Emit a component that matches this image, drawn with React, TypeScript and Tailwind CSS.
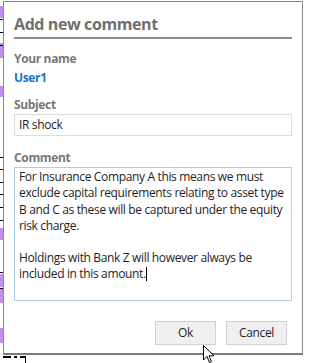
import React from 'react';

const stripMarks = [
  { top: 6, h: 12, purple: true },
  { top: 19, h: 1 },
  { top: 32, h: 1 },
  { top: 43, h: 15, purple: true },
  { top: 45, h: 1 },
  { top: 86, h: 11, purple: true },
  { top: 157, h: 1 },
  { top: 169, h: 1 },
  { top: 182, h: 1 },
  { top: 194, h: 1 },
  { top: 207, h: 1 },
  { top: 220, h: 1 },
  { top: 228, h: 12, purple: true },
  { top: 272, h: 1 },
  { top: 274, h: 13, purple: true },
  { top: 288, h: 1 },
  { top: 289, h: 14, purple: true },
  { top: 328, h: 15, purple: true },
];

export default function App() {
  return (
    <div className="relative w-[315px] h-[363px] overflow-hidden bg-white" style={{ fontFamily: '"Open Sans", "Noto Sans", sans-serif' }}>
      {/* background page peeking out on the left */}
      <div className="absolute left-0 top-0 w-[3px] h-[355px]">
        {stripMarks.map((m, i) => (
          <div
            key={i}
            className={m.purple ? 'absolute left-0 w-[3px] bg-[#c08ff0]' : 'absolute left-0 w-[3px] bg-black'}
            style={{ top: m.top, height: m.h }}
          />
        ))}
      </div>
      <div className="absolute left-[3px] top-[356px] flex gap-[3px]">
        <div className="w-[8px] h-[2px] bg-black" />
        <div className="w-[3px] h-[2px] bg-black" />
        <div className="w-[6px] h-[2px] bg-black" />
      </div>
      <div className="absolute left-[25px] top-[356px] w-[1px] h-[7px] bg-black" />

      {/* dialog */}
      <div className="absolute left-[3px] top-[1px] w-[300px] h-[354px] border border-[#8a8a8a] border-b-2 border-b-[#7a7a7a] bg-white px-[10px] tracking-[-0.35px]">
        <div className="pt-[11px] pb-[2px] border-b-2 border-[#8c8c8c] text-[16px] leading-[22px] font-bold text-[#6f6f6f] tracking-[-0.4px]">
          Add new comment
        </div>

        <div className="mt-[12px] text-[12px] leading-[16px] font-bold text-[#777]">Your name</div>
        <div className="mt-[3px] text-[12px] leading-[16px] font-bold text-[#1a73c9]">User1</div>

        <div className="mt-[11px] text-[12px] leading-[16px] font-bold text-[#777]">Subject</div>
        <div className="mt-[1px] h-[22px] border border-[#dcdcdc] px-[4px] text-[12px] leading-[20px] text-[#1e1e1e]">
          IR shock
        </div>

        <div className="mt-[14px] text-[12px] leading-[16px] font-bold text-[#777]">Comment</div>
        <div className="mt-[1px] h-[134px] border border-[#a9cfe8] px-[4px] pt-[1px] text-[12px] leading-[16.3px] text-[#1e1e1e]">
          <p>
            For Insurance Company A this means we must exclude capital requirements relating to asset type B and C as these will be captured under the equity risk charge.
          </p>
          <p className="mt-[16px]">
            Holdings with Bank Z will however always be included in this amount.
            <span className="inline-block w-[1px] h-[14px] bg-black align-[-3px]" />
          </p>
        </div>

        <div className="mt-[20px] flex justify-end gap-[10px] pr-[5px]">
          <button className="w-[61px] h-[24px] border border-[#d0d0d0] bg-[#f0f0f0] text-[12px] text-[#1e1e1e]">Ok</button>
          <button className="w-[61px] h-[24px] border border-[#d0d0d0] bg-[#f0f0f0] text-[12px] text-[#1e1e1e]">Cancel</button>
        </div>
      </div>

      {/* mouse pointer */}
      <svg className="absolute left-[203px] top-[345px]" width="14" height="20" viewBox="0 0 14 20">
        <path d="M0.5 0.5 L0.5 15 L4 11.5 L6.5 17.5 L8.5 16.7 L6 10.8 L11 10.8 Z" fill="white" stroke="black" strokeWidth="1" />
      </svg>
    </div>
  );
}
